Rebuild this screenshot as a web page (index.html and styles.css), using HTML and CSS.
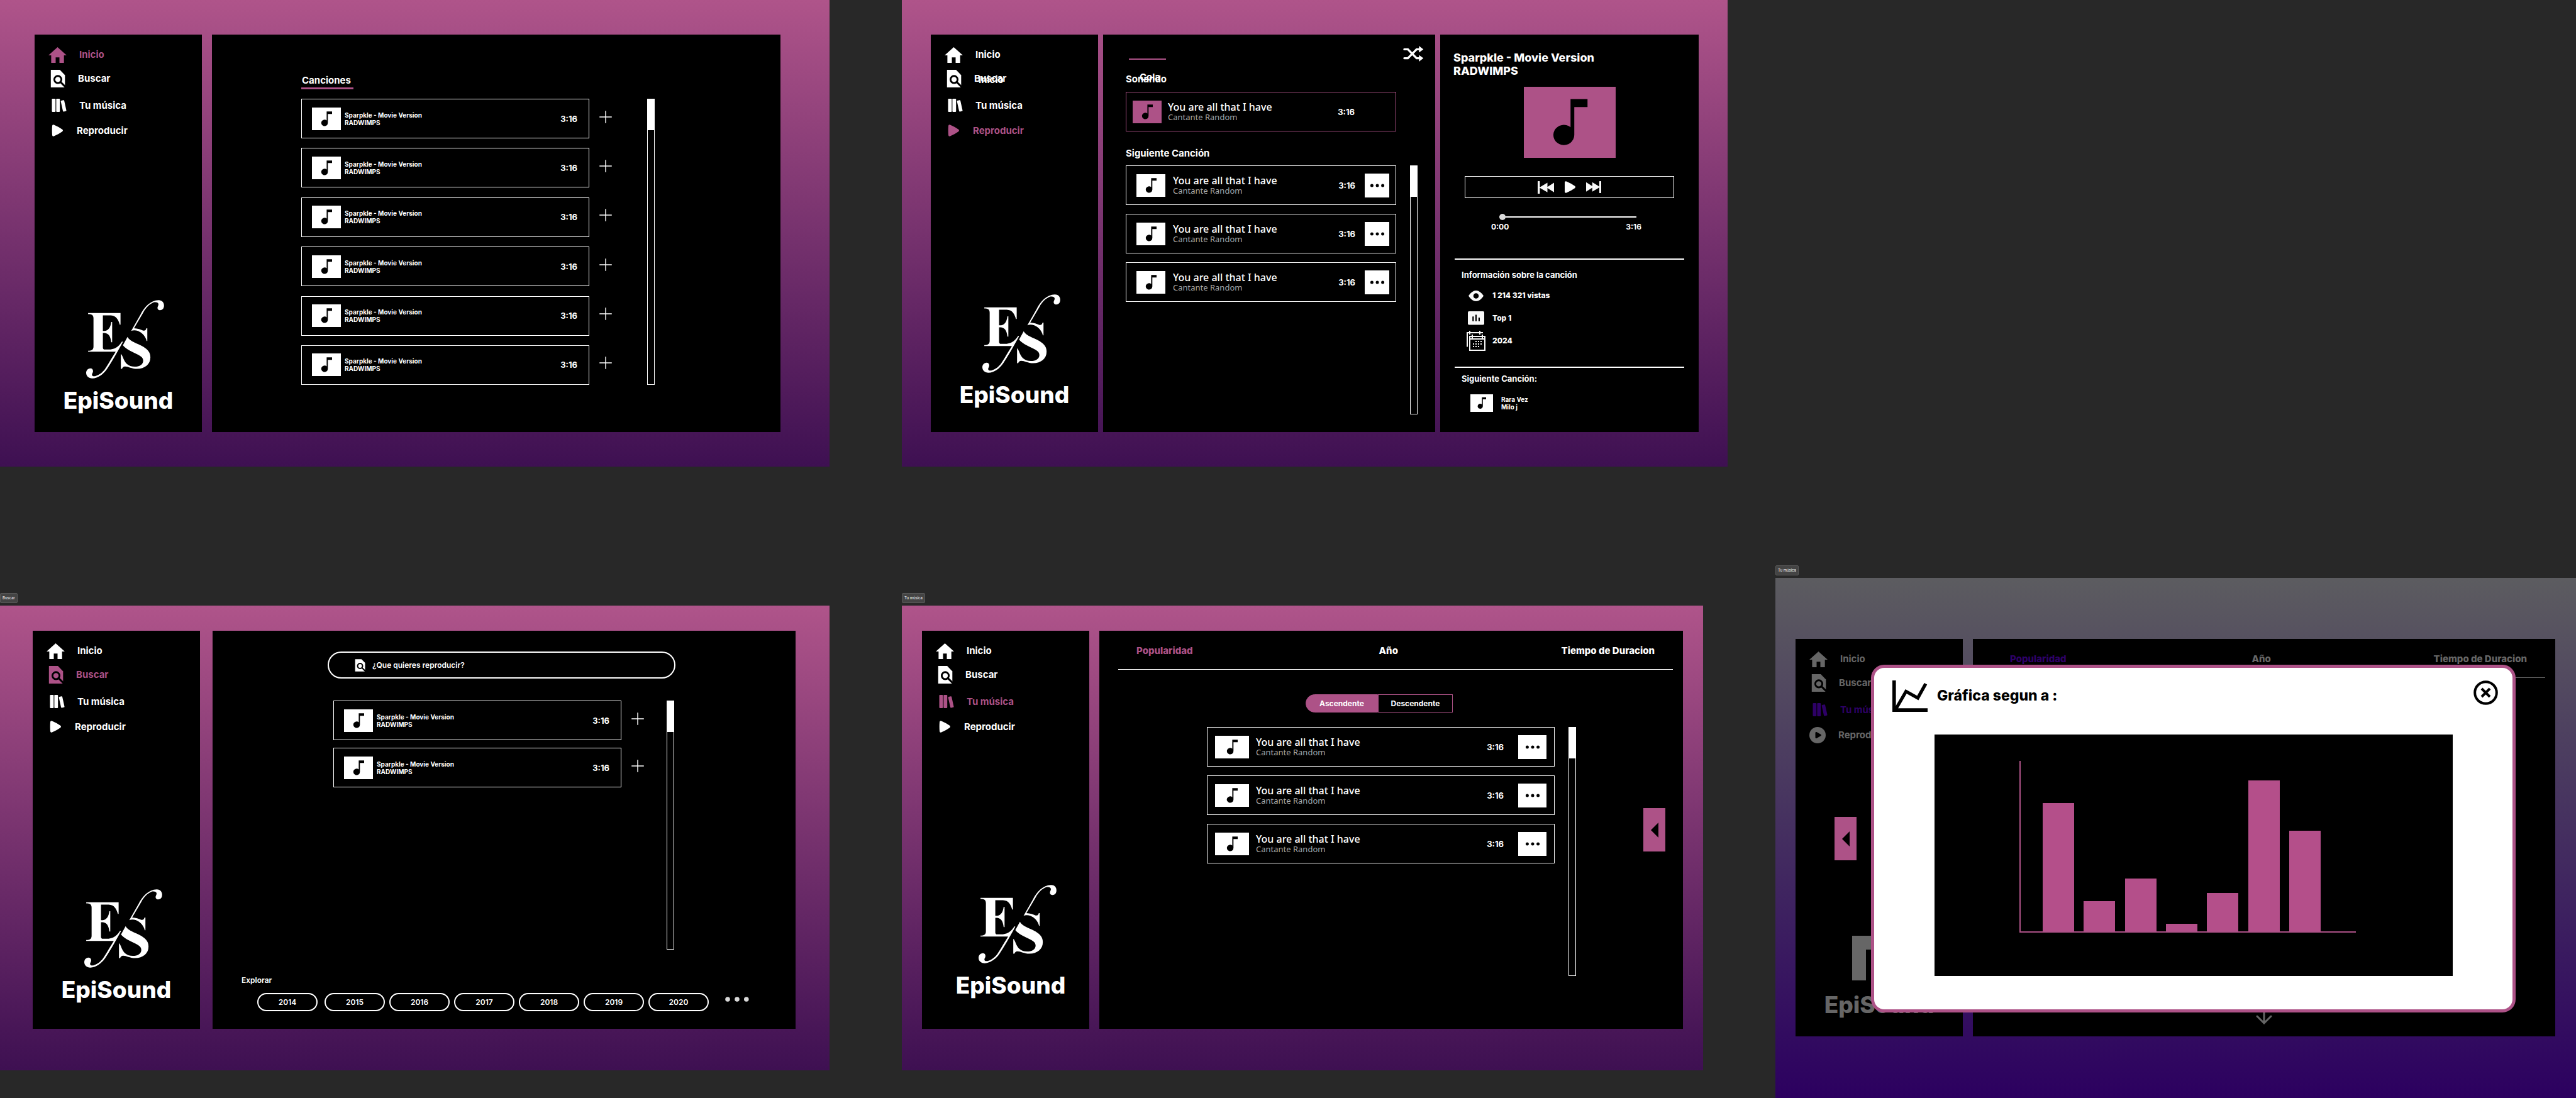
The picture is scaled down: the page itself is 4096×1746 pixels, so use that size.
FILE: index.html
```html
<!DOCTYPE html>
<html lang="es">
<head>
<meta charset="utf-8">
<meta name="viewport" content="width=device-width, initial-scale=1">
<title>EpiSound</title>
<link rel="stylesheet" href="styles.css">
</head>
<body>

<svg class="sprite" aria-hidden="true">
  <symbol id="i-home" viewBox="0 0 29 25"><path fill="currentColor" d="M14.5 0 29 13h-4.3v12h-7.2v-8.8h-6V25H4.4V13H0z"/></symbol>
  <symbol id="i-search" viewBox="0 0 27 28"><path fill="currentColor" d="M3.8 0h14.3l8.2 8.4V28H3.8z"/><circle cx="15" cy="15.4" r="5.6" fill="none" stroke="#000" stroke-width="2.9"/><path stroke="#000" stroke-width="3" d="m19.4 19.6 8.2 8.2"/></symbol>
  <symbol id="i-books" viewBox="0 0 29 21"><g fill="currentColor"><rect x="5.5" width="5.8" height="21" rx="1.2"/><rect x="12.4" width="5.8" height="21" rx="1.2"/><rect x="19.4" y="3.2" width="5.6" height="18" rx="1.2" transform="rotate(-12.5 19.4 3.2)"/></g></symbol>
  <symbol id="i-play" viewBox="0 0 25 19"><path fill="currentColor" d="M6 2Q6.4-.6 8.800.5 16 3.500 22 7.800 24 9.500 22 11.200 16 15.500 8.800 18.500 6.400 19.600 6 17 5.400 9.500 6 2z"/></symbol>
  <symbol id="i-circle-play" viewBox="0 0 26 26"><circle cx="13" cy="13" r="13" fill="currentColor"/><path d="M9.500 9q.5-1.500 2-1l7 4q1 1 0 2l-7 4q-1.500.5-2-1z"/></symbol>
  <symbol id="i-note" viewBox="0 0 46 36"><path d="M23.400 6.200H32v4.100h-6.700V24.400a5.300 5.100 0 1 1-1.900-3.900z"/></symbol>
  <symbol id="i-plus" viewBox="0 0 20 20"><path stroke="#fff" stroke-width="1.400" stroke-linecap="round" d="M10 .7v18.600M.7 10h18.600"/></symbol>
  <symbol id="i-dots" viewBox="0 0 24 6"><circle cx="3.400" cy="3" r="2.500"/><circle cx="12" cy="3" r="2.500"/><circle cx="20.600" cy="3" r="2.500"/></symbol>
  <symbol id="i-back" viewBox="0 0 12 24"><path d="M12 0v24L0 12z"/></symbol>
  <symbol id="i-logo" viewBox="267 265 681 685"><g fill="#fff">
    <path d="M284 378H567V480H560C550 440 530 400 480 399H413V535H430C465 530 480 500 486 457H494V633H486C480 580 460 556 430 553H413V680Q413 697 430 697H480C530 690 555 665 580 627L588 629C540 720 480 820 450 865C420 910 370 948 320 949C290 949 267 930 267 902C267 878 282 862 304 861C320 861 328 872 327 888C325 905 318 905 318 918C318 928 328 932 345 930C385 920 410 895 430 870C460 825 500 755 525 716H284V708C315 706 331 700 331 670V425C331 395 315 388 284 388Z"/>
    <path d="M660 535 740 395C775 325 830 267 900 266C928 266 947 285 947 312C947 338 932 354 910 353C896 352 889 343 890 330C893 315 900 310 898 298C895 285 880 281 860 284C820 300 790 330 765 375L685 512C715 512 745 525 765 532C785 535 788 525 793 512H801V622H795C785 580 755 550 720 535C695 526 675 528 660 535Z"/>
    <path d="M628 587C650 630 720 645 765 672C810 700 828 725 828 765C828 825 780 865 710 866C665 866 635 845 607 845C590 845 585 855 580 865H570V737C595 750 590 845 690 847C735 847 765 825 765 795C765 765 740 750 700 732C655 712 610 690 588 660Z"/></g></symbol>
</svg>

<main class="canvas">
  <div class="row row-top">

    <section class="board board-home">
      <aside class="panel sidebar">
        <nav><ul class="menu">
          <li><a class="active" href="#"><svg class="w29 h25"><use href="#i-home"/></svg>Inicio</a></li>
          <li><a href="#"><svg class="w27 h28"><use href="#i-search"/></svg>Buscar</a></li>
          <li><a href="#"><svg class="w29 h21"><use href="#i-books"/></svg>Tu música</a></li>
          <li><a href="#"><svg class="w25 h19"><use href="#i-play"/></svg>Reproducir</a></li>
        </ul></nav>
        <div class="brand"><svg class="mark"><use href="#i-logo"/></svg><span>EpiSound</span></div>
      </aside>
      <div class="panel home-main">
        <h2 class="tab-title">Canciones</h2>
        <div class="scroller">
          <ul class="songs spread">
            <li><article class="song compact"><svg class="art"><use href="#i-note"/></svg><p>Sparpkle - Movie Version<br>RADWIMPS</p><time>3:16</time></article><button class="add" aria-label="Añadir"><svg><use href="#i-plus"/></svg></button></li>
            <li><article class="song compact"><svg class="art"><use href="#i-note"/></svg><p>Sparpkle - Movie Version<br>RADWIMPS</p><time>3:16</time></article><button class="add" aria-label="Añadir"><svg><use href="#i-plus"/></svg></button></li>
            <li><article class="song compact"><svg class="art"><use href="#i-note"/></svg><p>Sparpkle - Movie Version<br>RADWIMPS</p><time>3:16</time></article><button class="add" aria-label="Añadir"><svg><use href="#i-plus"/></svg></button></li>
            <li><article class="song compact"><svg class="art"><use href="#i-note"/></svg><p>Sparpkle - Movie Version<br>RADWIMPS</p><time>3:16</time></article><button class="add" aria-label="Añadir"><svg><use href="#i-plus"/></svg></button></li>
            <li><article class="song compact"><svg class="art"><use href="#i-note"/></svg><p>Sparpkle - Movie Version<br>RADWIMPS</p><time>3:16</time></article><button class="add" aria-label="Añadir"><svg><use href="#i-plus"/></svg></button></li>
            <li><article class="song compact"><svg class="art"><use href="#i-note"/></svg><p>Sparpkle - Movie Version<br>RADWIMPS</p><time>3:16</time></article><button class="add" aria-label="Añadir"><svg><use href="#i-plus"/></svg></button></li>
          </ul>
          <div class="track tall"><div class="thumb"></div></div>
        </div>
      </div>
    </section>

    <section class="board board-play">
      <aside class="panel sidebar">
        <nav><ul class="menu">
          <li><a href="#"><svg class="w29 h25"><use href="#i-home"/></svg>Inicio</a></li>
          <li><a href="#"><svg class="w27 h28"><use href="#i-search"/></svg>Buscar</a><span class="ghost">Inicio</span></li>
          <li><a href="#"><svg class="w29 h21"><use href="#i-books"/></svg>Tu música</a></li>
          <li><a class="active" href="#"><svg class="w25 h19"><use href="#i-play"/></svg>Reproducir</a></li>
        </ul></nav>
        <div class="brand"><svg class="mark"><use href="#i-logo"/></svg><span>EpiSound</span></div>
      </aside>

      <div class="panel queue">
        <div class="queue-head">
          <span class="tab-line"></span>
          <button class="shuffle" aria-label="Aleatorio"><svg viewBox="0 0 32 25"><g fill="none" stroke="#fff" stroke-width="3.400" stroke-linecap="round"><path d="M2 5.400h5.600L21.500 19.600H26"/><path d="M2 19.600h5.600L21.500 5.400H26"/></g><path fill="#fff" d="m25.300 0 7 5.400-7 5.200zM25.300 14.400l7 5.200-7 5.400z"/></svg></button>
        </div>
        <h2 class="now">Sonando<span class="cola">Cola</span></h2>
        <article class="song playing"><svg class="art"><use href="#i-note"/></svg><p>You are all that I have<small>Cantante Random</small></p><time>3:16</time></article>
        <h2 class="next">Siguiente Canción</h2>
        <div class="scroller">
          <ul class="songs">
            <li><article class="song"><svg class="art"><use href="#i-note"/></svg><p>You are all that I have<small>Cantante Random</small></p><time>3:16</time><button class="more" aria-label="Más"><svg><use href="#i-dots"/></svg></button></article></li>
            <li><article class="song"><svg class="art"><use href="#i-note"/></svg><p>You are all that I have<small>Cantante Random</small></p><time>3:16</time><button class="more" aria-label="Más"><svg><use href="#i-dots"/></svg></button></article></li>
            <li><article class="song"><svg class="art"><use href="#i-note"/></svg><p>You are all that I have<small>Cantante Random</small></p><time>3:16</time><button class="more" aria-label="Más"><svg><use href="#i-dots"/></svg></button></article></li>
          </ul>
          <div class="track"><div class="thumb"></div></div>
        </div>
      </div>

      <div class="panel player">
        <h2 class="player-title">Sparpkle - Movie Version<br>RADWIMPS</h2>
        <svg class="cover"><use href="#i-note"/></svg>
        <div class="controls">
          <button aria-label="Anterior"><svg class="w26 h20" viewBox="0 0 26 20"><path fill="#f8f8f8" d="M0 .6Q0 0 .6 0h2.200q.6 0 .6.6V9.700L15.500 2.400v6.800L26 2.400v15.400L15.500 11v6.800L3.400 10.700v8.700q0 .6-.6.6H.6q-.6 0-.6-.6z"/></svg></button>
          <button aria-label="Reproducir"><svg class="w17 h19" viewBox="6 0 17 19"><use href="#i-play" width="25" height="19"/></svg></button>
          <button aria-label="Siguiente"><svg class="w24 h19" viewBox="0 0 24 19"><path fill="#f8f8f8" d="M0 1.800 9.800 8V1.800L21 8.700V.6Q21 0 21.600 0h1.800q.6 0 .6.6v17.800q0 .6-.6.6h-1.800q-.6 0-.6-.6v-8.300L9.800 16.800v-6.200L0 16.800z"/></svg></button>
        </div>
        <input class="seek" type="range" min="0" max="196" value="0" aria-label="Posición">
        <div class="times"><time>0:00</time><time>3:16</time></div>
        <hr>
        <h3>Información sobre la canción</h3>
        <ul class="stats">
          <li><svg class="w30 h17" viewBox="0 0 30 17"><path fill="#f8f8f8" fill-rule="evenodd" d="M3 8.500Q8.500 0 15 0t12 8.500Q21.500 17 15 17T3 8.500zm12-4.300a4.300 4.300 0 1 0 0 8.600 4.300 4.300 0 0 0 0-8.600z"/></svg>1 214 321 vistas</li>
          <li><svg class="w30 h22" viewBox="0 0 30 22"><rect x="2" width="26" height="21.600" rx="1.800" fill="#f8f8f8"/><path stroke="#000" stroke-width="2.200" stroke-linecap="round" d="M10.300 9v6M15 6.300V15M19.900 10.800V15"/></svg>Top 1</li>
          <li><svg class="w30 h32" viewBox="0 0 30 32"><g fill="none" stroke="#f8f8f8" stroke-width="2"><path d="M1 25.500V3h25M5 0v6M21 0v6M5 9h24v22H5zM5 13h24M9 6v6M25 6v6"/><path stroke-dasharray="2 2" d="M14 17h10M10 21h14M10 25h10"/></g></svg>2024</li>
        </ul>
        <hr>
        <h3 class="up-next">Siguiente Canción:</h3>
        <div class="mini"><svg class="art"><use href="#i-note"/></svg><p>Rara Vez<br>Milo j</p></div>
      </div>
    </section>
  </div>

  <div class="row row-bottom">

    <div class="frame">
      <span class="tag">Buscar</span>
      <section class="board board-search">
        <aside class="panel sidebar">
          <nav><ul class="menu">
            <li><a href="#"><svg class="w29 h25"><use href="#i-home"/></svg>Inicio</a></li>
            <li><a class="active" href="#"><svg class="w27 h28"><use href="#i-search"/></svg>Buscar</a></li>
            <li><a href="#"><svg class="w29 h21"><use href="#i-books"/></svg>Tu música</a></li>
            <li><a href="#"><svg class="w25 h19"><use href="#i-play"/></svg>Reproducir</a></li>
          </ul></nav>
          <div class="brand"><svg class="mark"><use href="#i-logo"/></svg><span>EpiSound</span></div>
        </aside>
        <div class="panel search-main">
          <label class="search"><svg class="w19 h20"><use href="#i-search"/></svg><input type="text" placeholder="¿Que quieres reproducir?" aria-label="¿Que quieres reproducir?"></label>
          <div class="scroller">
            <ul class="songs">
              <li><article class="song compact"><svg class="art"><use href="#i-note"/></svg><p>Sparpkle - Movie Version<br>RADWIMPS</p><time>3:16</time></article><button class="add" aria-label="Añadir"><svg><use href="#i-plus"/></svg></button></li>
              <li><article class="song compact"><svg class="art"><use href="#i-note"/></svg><p>Sparpkle - Movie Version<br>RADWIMPS</p><time>3:16</time></article><button class="add" aria-label="Añadir"><svg><use href="#i-plus"/></svg></button></li>
            </ul>
            <div class="track"><div class="thumb"></div></div>
          </div>
          <h3 class="explore">Explorar</h3>
          <div class="years">
            <button>2014</button><button>2015</button><button>2016</button><button>2017</button><button>2018</button><button>2019</button><button>2020</button>
            <svg class="dots" viewBox="0 0 38 8"><g fill="#d9d9d9"><circle cx="4" cy="4" r="3.800"/><circle cx="19" cy="4" r="3.800"/><circle cx="33.800" cy="4" r="3.800"/></g></svg>
          </div>
        </div>
      </section>
    </div>

    <div class="frame">
      <span class="tag">Tu música</span>
      <section class="board board-library">
        <aside class="panel sidebar">
          <nav><ul class="menu">
            <li><a href="#"><svg class="w29 h25"><use href="#i-home"/></svg>Inicio</a></li>
            <li><a href="#"><svg class="w27 h28"><use href="#i-search"/></svg>Buscar</a></li>
            <li><a class="active" href="#"><svg class="w29 h21"><use href="#i-books"/></svg>Tu música</a></li>
            <li><a href="#"><svg class="w25 h19"><use href="#i-play"/></svg>Reproducir</a></li>
          </ul></nav>
          <div class="brand"><svg class="mark"><use href="#i-logo"/></svg><span>EpiSound</span></div>
        </aside>
        <div class="panel library">
          <nav class="sorts"><a class="active" href="#">Popularidad</a><a href="#">Año</a><a href="#">Tiempo de Duracion</a></nav>
          <div class="order"><button class="on">Ascendente</button><button>Descendente</button></div>
          <div class="scroller">
            <ul class="songs">
              <li><article class="song wide"><svg class="art"><use href="#i-note"/></svg><p>You are all that I have<small>Cantante Random</small></p><time>3:16</time><button class="more" aria-label="Más"><svg><use href="#i-dots"/></svg></button></article></li>
              <li><article class="song wide"><svg class="art"><use href="#i-note"/></svg><p>You are all that I have<small>Cantante Random</small></p><time>3:16</time><button class="more" aria-label="Más"><svg><use href="#i-dots"/></svg></button></article></li>
              <li><article class="song wide"><svg class="art"><use href="#i-note"/></svg><p>You are all that I have<small>Cantante Random</small></p><time>3:16</time><button class="more" aria-label="Más"><svg><use href="#i-dots"/></svg></button></article></li>
            </ul>
            <div class="track"><div class="thumb"></div></div>
            <button class="drawer" aria-label="Abrir gráfica"><svg><use href="#i-back"/></svg></button>
          </div>
        </div>
      </section>
    </div>

    <div class="frame frame-modal">
      <span class="tag">Tu música</span>
      <section class="board board-chart">
        <aside class="panel sidebar">
          <nav><ul class="menu">
            <li><a href="#"><svg class="w29 h25"><use href="#i-home"/></svg>Inicio</a></li>
            <li><a href="#"><svg class="w27 h28"><use href="#i-search"/></svg>Buscar</a></li>
            <li><a class="active" href="#"><svg class="w29 h21"><use href="#i-books"/></svg>Tu música</a></li>
            <li><a href="#"><svg class="w26 h26"><use href="#i-circle-play"/></svg>Reproducir</a></li>
          </ul></nav>
          <button class="drawer" aria-label="Cerrar gráfica"><svg><use href="#i-back"/></svg></button>
          <div class="brand"><svg class="mark-note" viewBox="0 0 92 71"><path fill="currentColor" d="M0 0h92v71H70V22H22v49H0z"/></svg><span>EpiSound</span></div>
        </aside>
        <div class="panel library">
          <nav class="sorts"><a class="active" href="#">Popularidad</a><a href="#">Año</a><a href="#">Tiempo de Duracion</a></nav>
          <svg class="down" viewBox="0 0 26 40"><path fill="none" stroke="currentColor" stroke-width="3" stroke-linecap="round" d="M13 2v35M2 27l11 11 11-11"/></svg>
        </div>
        <dialog open class="modal" aria-label="Gráfica">
          <header>
            <svg class="line-chart" viewBox="0 0 56 50"><path d="M0 0h5.600v44.200H56V50H0z"/><path fill="none" stroke="#000" stroke-width="5.200" d="m5.500 45.500 16.200-28 18.700 10.400L53 5.200"/></svg>
            <h2>Gráfica segun a :</h2>
            <button class="close" aria-label="Cerrar"><svg viewBox="0 0 39 39"><circle cx="19.500" cy="19.500" r="17.300" fill="none" stroke="#000" stroke-width="4"/><path stroke="#000" stroke-width="4" d="m13 13 13 13M26 13 13 26"/></svg></button>
          </header>
          <div class="chart">
            <div class="bars">
              <i style="height:204px"></i><i style="height:48px"></i><i style="height:84px"></i><i style="height:12px"></i><i style="height:61px"></i><i style="height:240px"></i><i style="height:160px"></i>
            </div>
          </div>
        </dialog>
      </section>
    </div>
  </div>
</main>
</body>
</html>
```
FILE: styles.css
```css
:root {
  --accent: #ad5287;
  --ink: #fff;
  --gray: #a8a8a8;
}

* { box-sizing: border-box; }

body {
  margin: 0;
  background: #282828;
  color: var(--ink);
  font: 700 15px/20px Inter, "Liberation Sans", sans-serif;
}

h2, h3, p, ul { margin: 0; padding: 0; font: inherit; }
ul { list-style: none; }
a { color: inherit; text-decoration: none; }
svg { display: block; flex: none; }
button { border: 0; padding: 0; background: none; color: inherit; font: inherit; }
.sprite { position: absolute; width: 0; height: 0; }

/* icon sizes */
.w17 { width: 17px; } .w19 { width: 19px; } .w24 { width: 24px; } .w25 { width: 25px; }
.w26 { width: 26px; } .w27 { width: 27px; } .w29 { width: 29px; } .w30 { width: 30px; }
.h17 { height: 17px; } .h19 { height: 19px; } .h20 { height: 20px; } .h21 { height: 21px; }
.h22 { height: 22px; } .h25 { height: 25px; } .h26 { height: 26px; } .h28 { height: 28px; }
.h32 { height: 32px; }

/* canvas */
.canvas { display: flex; flex-direction: column; gap: 157px; min-height: 100vh; }
.row { display: grid; column-gap: 115px; }
.row-top { grid-template-columns: 1319fr 1313fr 1234fr; }
.row-bottom { grid-template-columns: 1319fr 1274fr 1273fr; flex: 1; }
.frame { display: flex; flex-direction: column; align-items: flex-start; align-self: start; gap: 4px; padding-top: 44px; }
.frame-modal { align-self: stretch; padding-top: 0; }
.frame-modal .board { flex: 1; }
.tag {
  padding: 0 3px;
  border: 1px solid #5a5a5a;
  border-radius: 2px;
  background: #444;
  font: 400 6px/14px Inter, sans-serif;
}

.board {
  display: flex;
  width: 100%;
  background: linear-gradient(#af548a, #3e1052);
}
.board-home { gap: 16px; padding: 55px 78px 55px 55px; }
.board-play { gap: 8px; padding: 55px 46px; }
.board-search { gap: 20px; padding: 40px 54px 66px 52px; }
.board-library { gap: 16px; padding: 40px 32px 66px; }
.board-chart {
  --accent: #2d0066;
  --ink: #666;
  position: relative;
  gap: 16px;
  padding: 97px 33px 98px 32px;
  background: linear-gradient(#5c5c60, #2c0060);
  color: var(--ink);
}

.panel { flex: 1; min-width: 0; background: #000; }

/* sidebar */
.sidebar { display: flex; flex: 0 0 266px; flex-direction: column; padding: 14px 0 29px 22px; }
.menu { display: grid; grid-template-rows: 36px 40px 45px 35px; }
.menu li { display: flex; position: relative; }
.menu a { display: flex; align-items: center; gap: 20px; }
.active { color: var(--accent); }
.ghost { position: absolute; left: 54px; top: 12px; }
.brand {
  display: flex;
  flex-direction: column;
  align-items: center;
  gap: 14px;
  margin: auto 22px 0 0;
  font-size: 37px;
  font-weight: 800;
  line-height: 42px;
}
.mark { width: 124px; height: 125px; margin-left: 22px; }
.mark-note { width: 92px; height: 71px; margin: 0 0 4px 6px; }
.board-play .sidebar { padding-bottom: 38px; }
.board-search .sidebar { padding-bottom: 41px; }
.board-library .sidebar { padding-bottom: 48px; }
.board-library .brand { margin-right: 6px; }

/* song lists */
.scroller { display: flex; align-items: flex-start; }
.songs { display: flex; flex: 1; flex-direction: column; gap: 14px; }
.songs.spread { align-self: stretch; justify-content: space-between; gap: 0; }
.songs li { display: flex; align-items: center; gap: 16px; }
.song {
  display: flex;
  flex: 1;
  align-items: center;
  min-height: 63px;
  padding: 0 10px 0 16px;
  border: 1px solid #fff;
}
.art { width: 46px; height: 36px; margin-right: 12px; background: #fff; }
.song p { font: 500 16px/18px "Noto Sans", sans-serif; }
.song small { display: block; color: var(--gray); font: 400 13px/15px "Noto Sans", sans-serif; }
.song time { margin-left: auto; font-size: 13px; }
.song.compact { padding-right: 18px; }
.song.compact .art { margin-right: 6px; }
.song.compact p { font: 700 10px/12px Inter, sans-serif; }
.song.wide { padding: 0 12px; }
.song.wide .art { width: 54px; height: 36px; margin-right: 11px; }
.song.playing { padding: 0 65px 0 10px; border-color: var(--accent); }
.song.playing .art { margin-right: 10px; background: var(--accent); }
.more { display: grid; place-items: center; width: 39px; height: 38px; margin-left: 15px; background: #fff; }
.more svg { width: 24px; height: 6px; }
.wide .more { width: 45px; margin-left: 23px; }
.add { padding-bottom: 6px; }
.add svg { width: 20px; height: 20px; }
.track { flex: none; width: 12px; height: 396px; border: 1px solid #fff; }
.track.tall { height: 455px; }
.thumb { height: 49px; background: #fff; }

/* home */
.home-main { padding: 63px 200px 75px 142px; }
.tab-title { display: inline-block; min-width: 83px; padding: 0 4px 1px 1px; border-bottom: 3px solid var(--accent); }
.home-main .scroller { gap: 56px; margin-top: 15px; }

/* queue */
.queue { padding: 18px 0 28px 36px; }
.queue-head { display: flex; justify-content: space-between; padding: 0 19px 0 5px; }
.tab-line { width: 59px; height: 2px; margin-top: 20px; background: var(--accent); }
.shuffle svg { width: 32px; height: 25px; overflow: visible; }
.now { position: relative; margin: 18px 0 10px; }
.cola { position: absolute; left: 22px; top: -3px; }
.queue .playing { margin-right: 62px; }
.next { margin: 25px 0 9px; }
.queue .scroller { gap: 22px; padding-right: 28px; }

/* player */
.player { display: flex; flex: 0 0 411px; flex-direction: column; padding: 26px 23px 31px; }
.player-title { margin-left: -2px; font-size: 18px; font-weight: 800; line-height: 21px; }
.cover { align-self: center; width: 146px; height: 113px; margin: 15px 0 29px; background: var(--accent); }
.controls {
  display: flex;
  justify-content: center;
  align-items: center;
  gap: 17px;
  height: 35px;
  margin: 0 16px;
  border: 1px solid #fff;
}
.seek {
  appearance: none;
  height: 10px;
  margin: 25px 76px 3px 71px;
  background: linear-gradient(#fff, #fff) center / 100% 2px no-repeat;
}
.seek::-webkit-slider-thumb { appearance: none; width: 10px; height: 10px; border-radius: 50%; background: #d9d9d9; }
.times { display: flex; justify-content: space-between; margin: 0 68px 0 58px; font-size: 12px; line-height: 16px; }
.player hr { width: 100%; height: 2px; margin: 42px 0 14px; border: 0; background: #fff; }
.player h3 { margin-left: 11px; font-size: 13px; }
.stats { margin: 5px 0 0 19px; font-size: 12px; font-weight: 800; }
.stats li { display: flex; align-items: center; gap: 11px; height: 36px; }
.player .stats + hr { margin: 23px 0 7px; }
.mini { display: flex; align-items: center; gap: 13px; margin: 15px 0 0 25px; font-size: 10px; line-height: 12px; }
.mini .art { width: 36px; height: 28px; margin: 0; }

/* search */
.search-main { padding: 33px 0 28px; }
.search {
  display: flex;
  align-items: center;
  gap: 11px;
  height: 43px;
  margin: 0 191px 35px 183px;
  padding: 0 39px;
  border: 2px solid #fff;
  border-radius: 22px;
}
.search input { flex: 1; min-width: 0; padding: 0; border: 0; outline: 0; background: none; color: #fff; font: 600 12px/20px Inter, sans-serif; }
.search input::placeholder { color: #fff; opacity: 1; }
.search-main .scroller { gap: 36px; padding: 0 193px 0 192px; }
.search-main .songs { gap: 12px; }
.explore { margin: 41px 0 12px 46px; font-size: 12px; line-height: 16px; font-weight: 600; }
.years { display: flex; gap: 7px; padding-left: 71px; }
.years button { width: 96px; height: 29px; border: 2px solid #fff; border-radius: 15px; font-size: 12px; line-height: 16px; font-weight: 600; }
.years button:first-child { margin-right: 4px; }
.dots { width: 38px; height: 8px; margin: 6px 0 0 19px; }

/* library */
.library { display: flex; flex-direction: column; padding: 22px 0 84px; }
.sorts {
  display: grid;
  grid-template-columns: 383fr 288fr auto;
  margin: 0 16px 0 30px;
  padding: 0 29px 19px;
  border-bottom: 1px solid var(--ink);
  font-weight: 800;
}
.order { display: flex; margin: 39px 0 23px 328px; font-size: 12px; line-height: 16px; }
.order button { width: 119px; height: 29px; border: 1px solid var(--accent); }
.order .on { width: 115px; border-radius: 15px 0 0 15px; background: var(--accent); }
.library .scroller { padding: 0 28px 0 171px; }
.library .track { margin-left: 22px; }
.drawer { display: grid; flex: none; place-items: center; width: 35px; height: 69px; margin: 129px 0 0 107px; background: #ad5287; }
.drawer svg { width: 12px; height: 24px; }

/* chart board */
.sidebar .drawer { margin: 113px 0 0 40px; }
.board-chart .library { justify-content: space-between; padding-bottom: 19px; }
.down { align-self: center; width: 26px; height: 40px; }
.modal {
  position: absolute;
  inset: 138px 96px auto 152px;
  width: auto;
  margin: 0;
  padding: 20px 0 53px;
  border: 5px solid #ad5287;
  border-radius: 21px;
  background: #fff;
  color: #000;
}
.modal header { display: flex; align-items: flex-start; gap: 15px; padding: 0 23px 0 29px; }
.line-chart { width: 56px; height: 50px; }
.modal h2 { flex: 1; font-size: 23px; font-weight: 800; line-height: 48px; }
.close svg { width: 39px; height: 39px; }
.chart { margin: 36px 95px 0 96px; padding: 42px 154px 69px 135px; background: #000; }
.bars {
  display: flex;
  align-items: flex-end;
  justify-content: space-between;
  height: 273px;
  padding: 0 56px 0 35px;
  border: solid #ad5287;
  border-width: 0 0 2px 2px;
}
.bars i { width: 50px; background: #b44f8a; }
```
